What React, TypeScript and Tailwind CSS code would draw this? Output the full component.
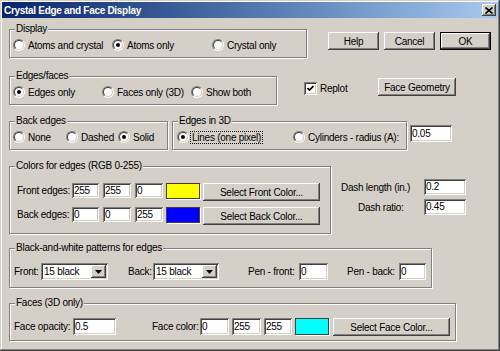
import type { ReactNode } from "react";

const sunken =
  "shadow-[inset_1px_1px_#808080,inset_-1px_-1px_#ffffff,inset_2px_2px_#404040,inset_-2px_-2px_#d4d0c8]";
const raised = "shadow-[inset_-1px_-1px_#404040,inset_1px_1px_#ffffff,inset_-2px_-2px_#808080]";

function cx(...parts: (string | false | undefined)[]) {
  return parts.filter(Boolean).join(" ");
}

function Group({ label, className, children }: { label: string; className?: string; children: ReactNode }) {
  return (
    <div
      className={cx(
        "relative shrink-0 border border-[#808080] shadow-[inset_1px_1px_#ffffff,1px_1px_#ffffff]",
        className,
      )}
    >
      <span className="absolute -top-[7px] left-[5px] bg-[#d4d0c8] px-[1px] leading-[12px]">{label}</span>
      {children}
    </div>
  );
}

function RadioDot({ checked }: { checked?: boolean }) {
  return (
    <span className="h-[12px] w-[12px] shrink-0 rounded-full border border-t-[#808080] border-l-[#808080] border-r-white border-b-white">
      <span className="flex h-full w-full items-center justify-center rounded-full border border-t-[#404040] border-l-[#404040] border-r-[#d4d0c8] border-b-[#d4d0c8] bg-white">
        {checked && <span className="h-[4px] w-[4px] rounded-full bg-black" />}
      </span>
    </span>
  );
}

function Radio({ label, checked, className }: { label: ReactNode; checked?: boolean; className?: string }) {
  return (
    <div className={cx("flex shrink-0 items-center gap-[3px]", className)}>
      <RadioDot checked={checked} />
      <span className="whitespace-nowrap">{label}</span>
    </div>
  );
}

function Button({ children, className, isDefault }: { children: ReactNode; className?: string; isDefault?: boolean }) {
  return (
    <div
      className={cx(
        "flex h-[18px] shrink-0 items-center justify-center whitespace-nowrap bg-[#d4d0c8]",
        raised,
        isDefault && "border border-black",
        className,
      )}
    >
      {children}
    </div>
  );
}

function Field({ value, className }: { value: string; className?: string }) {
  return (
    <div className={cx("flex h-[15px] shrink-0 items-center bg-white pl-[2px] leading-none", sunken, className)}>
      {value}
    </div>
  );
}

function Swatch({ color, className }: { color: string; className?: string }) {
  return (
    <div
      className={cx(
        "h-[16px] w-[34px] shrink-0 border border-[#404040] shadow-[1px_1px_#ffffff]",
        color,
        className,
      )}
    />
  );
}

function Combo({ value, className }: { value: string; className?: string }) {
  return (
    <div className={cx("flex h-[17px] shrink-0 items-center bg-white p-[2px]", sunken, className)}>
      <span className="flex-1 pl-[1px]">{value}</span>
      <span className={cx("flex h-[13px] w-[15px] items-center justify-center bg-[#d4d0c8]", raised)}>
        <svg width="7" height="4" viewBox="0 0 7 4">
          <path d="M0 0h7L3.5 4z" fill="#000" />
        </svg>
      </span>
    </div>
  );
}

function Label({ children, className }: { children: ReactNode; className?: string }) {
  return <span className={cx("shrink-0 whitespace-nowrap", className)}>{children}</span>;
}

export default function App() {
  return (
    <div className="h-[351px] w-[500px] select-none bg-[#d4d0c8] p-[2px] font-['Liberation_Sans',Arial,sans-serif] text-[10px] tracking-[-0.25px] text-black shadow-[inset_-1px_-1px_#404040,inset_1px_1px_#d4d0c8,inset_-2px_-2px_#808080,inset_2px_2px_#ffffff]">
      {/* caption */}
      <div className="flex h-[16px] items-center justify-between bg-linear-to-r from-[#0a246a] to-[#a6caf0] pl-[2px] pr-[2px]">
        <span className="text-[10px] font-bold tracking-[-0.3px] text-white">Crystal Edge and Face Display</span>
        <span className={cx("flex h-[12px] w-[14px] items-center justify-center bg-[#d4d0c8]", raised)}>
          <svg width="8" height="7" viewBox="0 0 8 7">
            <path d="M0.5 0.5l7 6M7.5 0.5l-7 6" stroke="#000" strokeWidth="1.6" />
          </svg>
        </span>
      </div>

      <div className="flex flex-col pl-[7px]">
        {/* display + dialog buttons */}
        <div className="mt-[11px] flex items-start">
          <Group label="Display" className="flex h-[29px] w-[298px] items-center pl-[3px] pt-[3px]">
            <Radio label="Atoms and crystal" className="w-[99px]" />
            <Radio label="Atoms only" checked className="w-[100px]" />
            <Radio label="Crystal only" />
          </Group>
          <Button className="ml-[21px] mt-[3px] w-[51px]">Help</Button>
          <Button className="ml-[5px] mt-[3px] w-[51px]">Cancel</Button>
          <Button isDefault className="ml-[5px] mt-[3px] w-[51px]">OK</Button>
        </div>

        {/* edges / faces */}
        <div className="mt-[18px] flex items-start">
          <Group label="Edges/faces" className="flex h-[29px] w-[268px] items-center pl-[3px] pt-[3px]">
            <Radio label="Edges only" checked className="w-[89px]" />
            <Radio label="Faces only (3D)" className="w-[89px]" />
            <Radio label="Show both" />
          </Group>
          <div className="ml-[27px] mt-[5px] flex w-[74px] shrink-0 items-center gap-[3px]">
            <span className={cx("flex h-[13px] w-[13px] items-center justify-center bg-white", sunken)}>
              <svg width="7" height="7" viewBox="0 0 7 7">
                <path d="M0.5 3l2 2 4-4" stroke="#000" strokeWidth="1.7" fill="none" />
              </svg>
            </span>
            <span>Replot</span>
          </div>
          <Button className="mt-[2px] w-[78px]">Face Geometry</Button>
        </div>

        {/* back edges / edges in 3D */}
        <div className="mt-[16px] flex items-start">
          <Group label="Back edges" className="flex h-[29px] w-[159px] items-center pl-[3px] pt-[3px]">
            <Radio label="None" className="w-[53px]" />
            <Radio label="Dashed" className="w-[52px]" />
            <Radio label="Solid" checked />
          </Group>
          <Group label="Edges in 3D" className="ml-[4px] flex h-[29px] w-[235px] items-center pl-[4px] pt-[3px]">
            <div className="flex w-[116px] shrink-0 items-center">
              <RadioDot checked />
              <span className="ml-[1px] whitespace-nowrap border border-dotted border-black px-[1px] leading-[11px]">
                Lines (one pixel)
              </span>
            </div>
            <Radio label="Cylinders - radius (A):" />
          </Group>
          <Field value="0.05" className="ml-[3px] mt-[4px] h-[17px] w-[42px]" />
        </div>

        {/* colors for edges + dash settings */}
        <div className="mt-[16px] flex items-start">
          <Group label="Colors for edges (RGB 0-255)" className="flex h-[68px] w-[322px] flex-col pl-[7px] pt-[16px]">
            <div className="flex items-start">
              <Label className="flex h-[15px] w-[55px] items-center">Front edges:</Label>
              <Field value="255" className="w-[27px]" />
              <Field value="255" className="ml-[4px] w-[28px]" />
              <Field value="0" className="ml-[4px] w-[28px]" />
              <Swatch color="bg-[#ffff00]" className="ml-[3px]" />
              <Button className="ml-[3px] h-[17px] w-[117px]">Select Front Color...</Button>
            </div>
            <div className="mt-[6px] flex items-start">
              <Label className="flex h-[15px] w-[55px] items-center">Back edges:</Label>
              <Field value="0" className="w-[27px]" />
              <Field value="0" className="ml-[4px] w-[28px]" />
              <Field value="255" className="ml-[4px] w-[28px]" />
              <Swatch color="bg-[#0000ff]" className="ml-[3px]" />
              <Button className="ml-[3px] h-[17px] w-[117px]">Select Back Color...</Button>
            </div>
          </Group>
          <div className="ml-[10px] mt-[13px] flex flex-col">
            <div className="flex items-center">
              <Label className="w-[83px]">Dash length (in.)</Label>
              <Field value="0.2" className="h-[16px] w-[42px]" />
            </div>
            <div className="mt-[4px] flex items-center">
              <Label className="w-[83px] pl-[17px]">Dash ratio:</Label>
              <Field value="0.45" className="h-[16px] w-[42px]" />
            </div>
          </div>
        </div>

        {/* black-and-white patterns */}
        <Group label="Black-and-white patterns for edges" className="mt-[14px] flex h-[40px] w-[423px] items-start pl-[4px] pt-[14px]">
          <Label className="flex h-[17px] w-[27px] items-center">Front:</Label>
          <Combo value="15 black" className="w-[67px]" />
          <Label className="ml-[20px] flex h-[17px] w-[25px] items-center">Back:</Label>
          <Combo value="15 black" className="w-[66px]" />
          <Label className="ml-[29px] flex h-[17px] w-[51px] items-center">Pen - front:</Label>
          <Field value="0" className="h-[17px] w-[29px]" />
          <Label className="ml-[19px] flex h-[17px] w-[52px] items-center">Pen - back:</Label>
          <Field value="0" className="h-[17px] w-[27px]" />
        </Group>

        {/* faces */}
        <Group label="Faces (3D only)" className="mt-[15px] flex h-[38px] w-[447px] items-start pl-[4px] pt-[14px]">
          <Label className="flex h-[17px] w-[59px] items-center">Face opacity:</Label>
          <Field value="0.5" className="h-[17px] w-[43px]" />
          <Label className="ml-[36px] flex h-[17px] w-[48px] items-center">Face color:</Label>
          <Field value="0" className="h-[17px] w-[29px]" />
          <Field value="255" className="ml-[3px] h-[17px] w-[29px]" />
          <Field value="255" className="ml-[3px] h-[17px] w-[28px]" />
          <Swatch color="bg-[#00ffff]" className="ml-[3px] h-[17px]" />
          <Button className="ml-[4px] w-[117px]">Select Face Color...</Button>
        </Group>
      </div>
    </div>
  );
}
